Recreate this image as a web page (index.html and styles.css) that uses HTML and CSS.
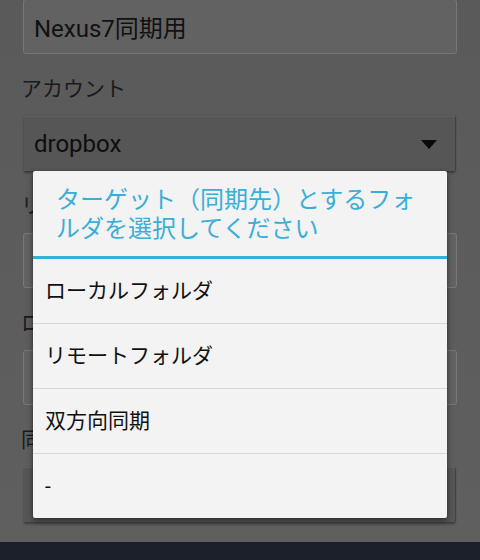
FILE: index.html
```html
<!DOCTYPE html>
<html lang="ja">
<head>
<meta charset="utf-8">
<title>フォルダ選択</title>
<link rel="stylesheet" href="styles.css">
</head>
<body>
<div class="screen">
  <div class="form">
    <div class="edit first">Nexus7同期用</div>
    <div class="label">アカウント</div>
    <div class="spinner"><span>dropbox</span><svg class="caret" width="16" height="9" viewBox="0 0 16 9"><polygon points="0,0 16,0 8,9" fill="#0a0a0a"/></svg></div>
    <div class="label">リモート</div>
    <div class="edit"></div>
    <div class="label">ローカル</div>
    <div class="edit"></div>
    <div class="label">同期方向</div>
    <div class="spinner"><span></span></div>

    <div class="dialog">
      <div class="dialog-title">ターゲット（同期先）とするフォルダを選択してください</div>
      <ul class="dialog-list">
        <li>ローカルフォルダ</li>
        <li>リモートフォルダ</li>
        <li>双方向同期</li>
        <li>-</li>
      </ul>
    </div>
  </div>
  <div class="navbar"></div>
</div>
</body>
</html>
```

FILE: styles.css
```css
* { box-sizing: border-box; }
html, body { margin: 0; padding: 0; }
body {
  width: 480px;
  height: 560px;
  overflow: hidden;
  font-family: Roboto, "Noto Sans CJK JP", sans-serif;
  background: #5c5c5c;
}
.screen {
  height: 560px;
  display: flex;
  flex-direction: column;
}
.form {
  position: relative;
  flex: 1;
  overflow: hidden;
  padding: 0 23px 0 21px;
  background: linear-gradient(#5a5a5a, #5f5f5f);
}
.edit {
  height: 55px;
  margin-left: 2px;
  border: 1px solid #787878;
  border-radius: 3px;
  background: #626262;
  display: flex;
  align-items: center;
  padding-left: 10px;
  font-size: 24px;
  color: #111;
}
.edit.first {
  margin-top: -1px;
}
.label {
  height: 62px;
  padding-top: 4px;
  display: flex;
  align-items: center;
  font-size: 21px;
  color: #1a1a1a;
}
.spinner {
  height: 55px;
  margin-left: 3px;
  margin-right: 2px;
  background: #565656;
  border-top: 1px solid #606060;
  box-shadow: 0 2px 2px rgba(0,0,0,0.35), 1px 0 1px rgba(0,0,0,0.2);
  display: flex;
  align-items: center;
  justify-content: space-between;
  padding: 0 18px 0 10px;
  font-size: 24px;
  color: #0e0e0e;
}
.caret { display: block; }
.navbar {
  height: 18px;
  background: #1c202a;
}
.dialog {
  position: absolute;
  left: 33px;
  top: 171px;
  width: 414px;
  background: #f3f3f3;
  border-radius: 2px;
  box-shadow: 0 3px 6px rgba(0,0,0,0.45), 0 0 2px rgba(0,0,0,0.3);
}
.dialog-title {
  height: 88px;
  padding: 15px 23px 0 23px;
  font-size: 24px;
  line-height: 29px;
  color: #3aaed8;
  border-bottom: 3px solid #3aaed8;
}
.dialog-list {
  list-style: none;
  margin: 0;
  padding: 0;
}
.dialog-list li {
  height: 65px;
  display: flex;
  align-items: center;
  padding: 0 0 4px 12px;
  font-size: 21px;
  color: #111;
  border-top: 1px solid #d8d8d8;
}
.dialog-list li:first-child {
  border-top: none;
  height: 64px;
}
.dialog-list li:last-child {
  padding-bottom: 0;
}
```
